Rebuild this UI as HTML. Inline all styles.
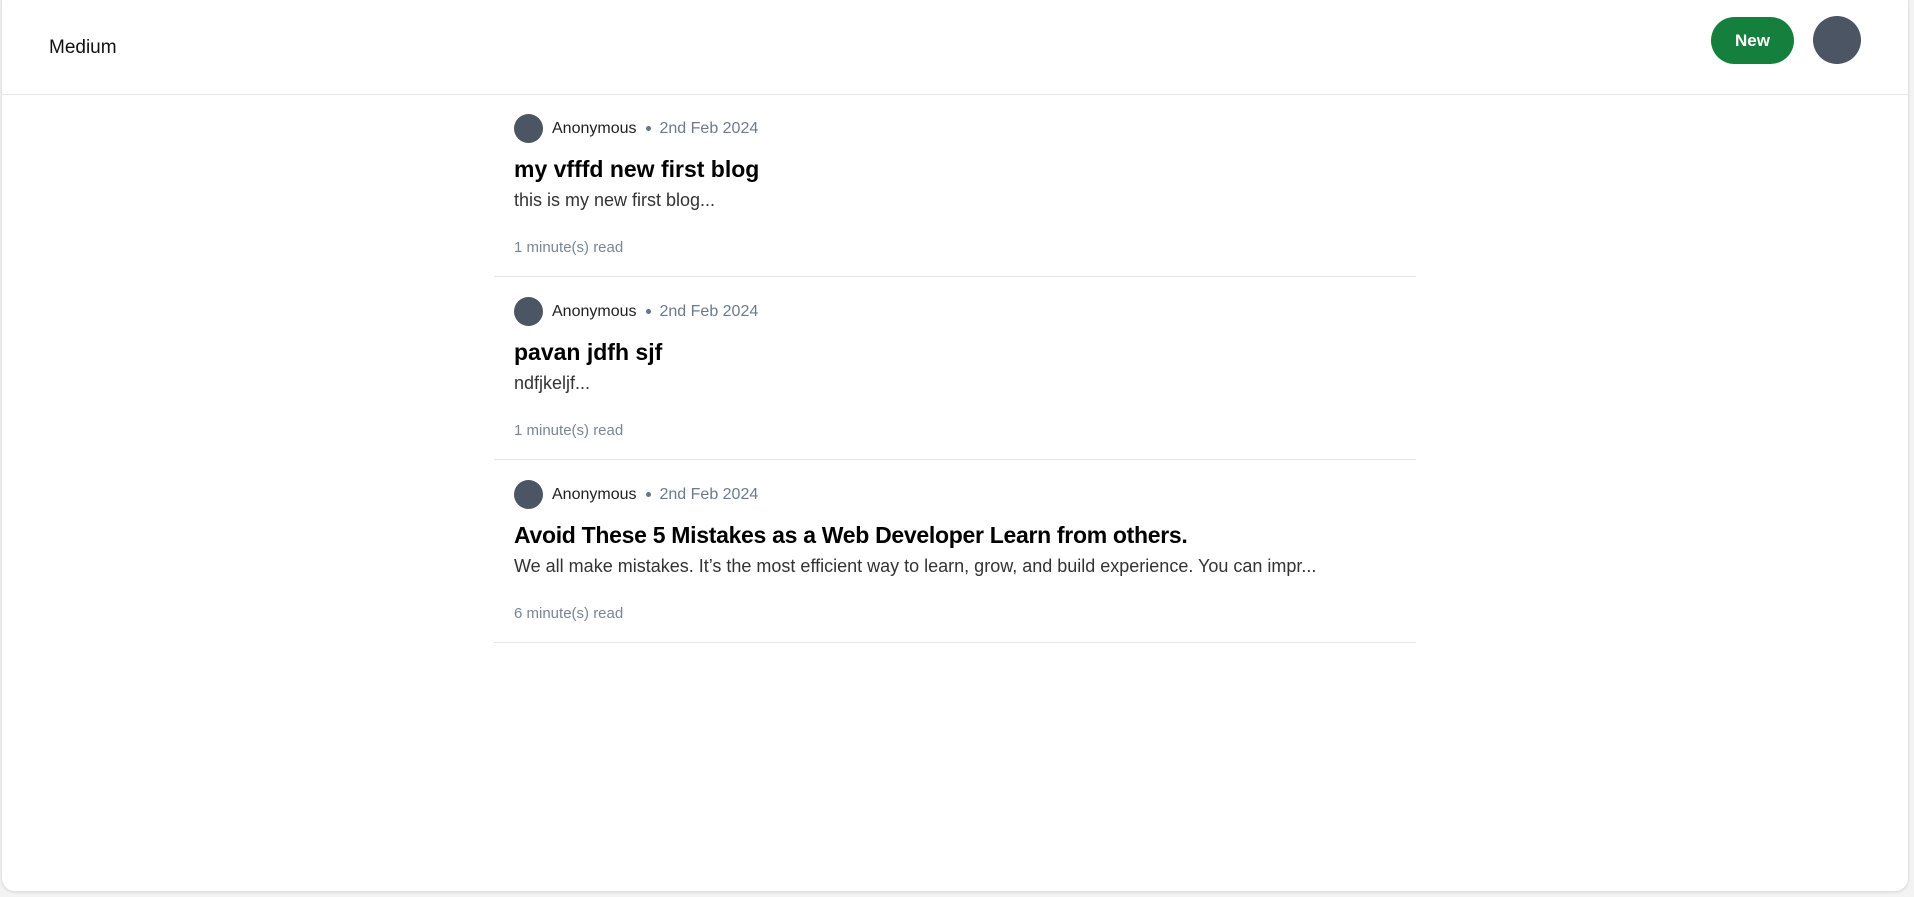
<!DOCTYPE html>
<html><head><meta charset="utf-8"><style>
*{margin:0;padding:0;box-sizing:border-box}
html,body{width:1914px;height:897px;background:#f3f3f3;overflow:hidden;font-family:"Liberation Sans",sans-serif}
.card{position:absolute;left:1px;top:-12px;width:1908px;height:904px;background:#fff;border:1px solid #e2e2e2;border-radius:14px;box-shadow:0 1px 2px rgba(0,0,0,.08)}
.hdr{position:absolute;left:1px;top:94px;width:1907px;height:1px;background:#e5e7eb}
.logo{position:absolute;left:49px;top:37px;font-size:19px;color:#111}
.btn{position:absolute;left:1711px;top:17px;width:83px;height:47px;border-radius:24px;background:#15803d;color:#fff;font-weight:bold;font-size:17px;line-height:47px;text-align:center}
.av{position:absolute;left:1813px;top:16px;width:48px;height:48px;border-radius:50%;background:#4b5563}
.item{position:absolute;left:494px;width:922px;height:183px;border-bottom:1px solid #e5e7eb}
.sa{position:absolute;left:20px;top:20px;width:29px;height:29px;border-radius:50%;background:#4b5563}
.meta{position:absolute;left:58px;top:26px;font-size:16px;color:#1f1f1f;white-space:nowrap}
.meta .d{color:#6b7a8e}
.meta .dot{display:inline-block;width:5px;height:5px;border-radius:50%;background:#64748b;vertical-align:middle;margin:0 9px 0 9px}
.t{position:absolute;left:20px;top:62px;font-size:23px;font-weight:bold;color:#000;white-space:nowrap}
.e{position:absolute;left:20px;top:96px;font-size:18px;color:#333;white-space:nowrap}
.r{position:absolute;left:20px;top:145px;font-size:15px;color:#7a8696;white-space:nowrap}
</style></head><body>
<div class="card"></div>
<div class="logo">Medium</div>
<div class="btn">New</div>
<div class="av"></div>
<div class="hdr"></div>

<div class="item" style="top:94px">
<div class="sa"></div>
<div class="meta">Anonymous<span class="dot"></span><span class="d">2nd Feb 2024</span></div>
<div class="t">my vfffd new first blog</div>
<div class="e">this is my new first blog...</div>
<div class="r">1 minute(s) read</div>
</div>

<div class="item" style="top:277px">
<div class="sa"></div>
<div class="meta">Anonymous<span class="dot"></span><span class="d">2nd Feb 2024</span></div>
<div class="t">pavan jdfh sjf</div>
<div class="e">ndfjkeljf...</div>
<div class="r">1 minute(s) read</div>
</div>

<div class="item" style="top:460px">
<div class="sa"></div>
<div class="meta">Anonymous<span class="dot"></span><span class="d">2nd Feb 2024</span></div>
<div class="t" style="letter-spacing:-0.3px">Avoid These 5 Mistakes as a Web Developer Learn from others.</div>
<div class="e">We all make mistakes. It’s the most efficient way to learn, grow, and build experience. You can impr...</div>
<div class="r">6 minute(s) read</div>
</div>
</body></html>
